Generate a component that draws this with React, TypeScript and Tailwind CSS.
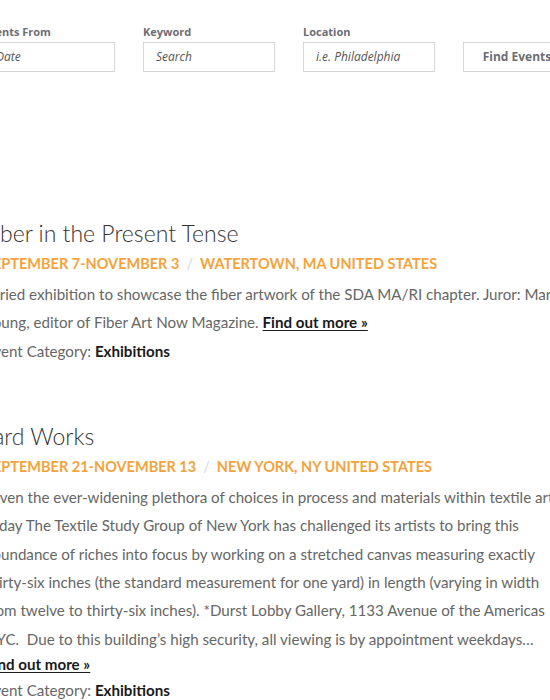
const labelFont = { fontFamily: "'Open Sans', 'DejaVu Sans', sans-serif" };

function Field({ label, placeholder }: { label: string; placeholder: string }) {
  return (
    <div className="flex w-[132px] shrink-0 flex-col">
      <label className="mb-[3px] text-[11px] font-bold leading-[15px] text-[#6d6d75]" style={labelFont}>
        {label}
      </label>
      <div className="flex h-[30px] items-center border border-[#d6d6d6] bg-white px-3">
        <span className="text-[12px] italic text-[#555]" style={labelFont}>
          {placeholder}
        </span>
      </div>
    </div>
  );
}

type Event = {
  title: string;
  dates: string;
  place: string;
  lines: string[];
  linkOwnLine: boolean;
};

const events: Event[] = [
  {
    title: "Fiber in the Present Tense",
    dates: "September 7-November 3",
    place: "Watertown, MA United States",
    lines: [
      "Juried exhibition to showcase the fiber artwork of the SDA MA/RI chapter. Juror: Marcia",
      "Young, editor of Fiber Art Now Magazine.",
    ],
    linkOwnLine: false,
  },
  {
    title: "Yard Works",
    dates: "September 21-November 13",
    place: "New York, NY United States",
    lines: [
      "Given the ever-widening plethora of choices in process and materials within textile art",
      "today The Textile Study Group of New York has challenged its artists to bring this",
      "abundance of riches into focus by working on a stretched canvas measuring exactly",
      "thirty-six inches (the standard measurement for one yard) in length (varying in width",
      "from twelve to thirty-six inches). *Durst Lobby Gallery, 1133 Avenue of the Americas",
      "NYC.\u00a0 Due to this building\u2019s high security, all viewing is by appointment weekdays\u2026",
    ],
    linkOwnLine: true,
  },
];

function FindOutMore() {
  return <a className="font-bold text-[#1a1a1a] underline underline-offset-2">Find out more »</a>;
}

function EventItem({ ev }: { ev: Event }) {
  return (
    <article className="flex flex-col">
      <h2 className="-ml-[3px] text-[23px] font-light leading-[30px] text-[#333]">{ev.title}</h2>
      <div className="mt-[3px] flex items-center gap-[7px] whitespace-nowrap text-[14.5px] font-bold uppercase leading-[26px] text-[#f5a23c]">
        <span>{ev.dates}</span>
        <span className="font-normal text-[#d8d8d8]">/</span>
        <span>{ev.place}</span>
      </div>
      <p className="mt-[3px] whitespace-nowrap text-[15.15px] leading-[28.4px] text-[#666]">
        {ev.lines.map((l, i) => (
          <span key={i}>
            {l}
            {i === ev.lines.length - 1 && !ev.linkOwnLine ? (
              <>
                {" "}
                <FindOutMore />
              </>
            ) : null}
            {i < ev.lines.length - 1 ? <br /> : null}
          </span>
        ))}
      </p>
      {ev.linkOwnLine ? (
        <div className="-mt-[3px] text-[15.15px] leading-[28px]">
          <FindOutMore />
        </div>
      ) : null}
      <p
        className={
          ev.linkOwnLine
            ? "-mt-[2px] whitespace-nowrap text-[15.15px] leading-[28px] text-[#666]"
            : "whitespace-nowrap text-[15.15px] leading-[28px] text-[#666]"
        }
      >
        Event Category: <span className="font-bold text-[#1a1a1a]">Exhibitions</span>
      </p>
    </article>
  );
}

export default function App() {
  return (
    <div
      className="h-[700px] w-[550px] overflow-hidden bg-white"
      style={{ fontFamily: "Lato, 'Noto Sans', sans-serif" }}
    >
      <div className="-ml-[15px] w-[620px]">
        {/* Search bar */}
        <div className="ml-[-2px] flex items-end gap-7 pt-[24px]">
          <Field label="Events From" placeholder="Date" />
          <Field label="Keyword" placeholder="Search" />
          <Field label="Location" placeholder="i.e. Philadelphia" />
          <button
            className="flex h-[30px] w-[108px] shrink-0 items-center justify-center border border-[#d6d6d6] bg-white text-[12px] font-bold text-[#6d6d75]"
            style={labelFont}
          >
            Find Events
          </button>
        </div>

        {/* Events list */}
        <div className="mt-[146px] flex flex-col gap-[56px]">
          {events.map((ev) => (
            <EventItem key={ev.title} ev={ev} />
          ))}
        </div>
      </div>
    </div>
  );
}
